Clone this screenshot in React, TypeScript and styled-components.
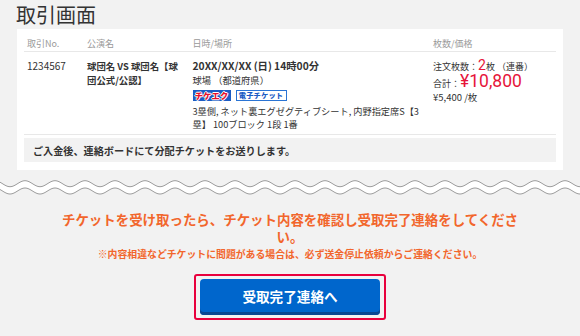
import styled, { createGlobalStyle } from 'styled-components'

const GlobalStyle = createGlobalStyle`
  body {
    margin: 0;
    background: #f2f2f2;
    font-family: "Noto Sans CJK JP", "Noto Sans", sans-serif;
    color: #333;
  }
`

const Page = styled.div`
  width: 580px;
  height: 336px;
  overflow: hidden;
`

const Title = styled.h1`
  margin: 0;
  padding-left: 16px;
  height: 29px;
  line-height: 29px;
  font-size: 20px;
  font-weight: 400;
  color: #333;
`

const Card = styled.div`
  margin: 0 17px;
  padding: 0 7px 8px;
  background: #fff;
`

const Row = styled.div<{ head?: boolean }>`
  display: grid;
  grid-template-columns: 60px 105.5px 240.5px 1fr;
  border-bottom: 1px solid #e8e8e8;
  padding: ${(p) => (p.head ? '9px 0 2px' : '7px 0 3px')};
`

const HeadCell = styled.div`
  padding-left: 3px;
  font-size: 9px;
  line-height: 11px;
  color: #999;
`

const Cell = styled.div<{ pr?: number }>`
  padding-left: 3px;
  padding-right: ${(p) => p.pr ?? 0}px;
  font-size: 9.3px;
  line-height: 14px;
`

const OrderNo = styled.span`
  font-size: 10px;
`

const EventName = styled.div`
  font-weight: 700;
  font-size: 9.4px;
  line-height: 13.5px;
  padding-top: 1px;
`

const DateLine = styled.div`
  font-weight: 700;
  font-size: 10.3px;
  line-height: 14px;
`

const Badges = styled.div`
  display: flex;
  gap: 5px;
  margin-top: 3px;
  height: 11px;
`

const Badge = styled.span<{ variant: 'qe' | 'e' }>`
  display: flex;
  align-items: center;
  justify-content: center;
  box-sizing: border-box;
  height: 11px;
  line-height: 9px;
  font-weight: 900;
  font-size: ${(p) => (p.variant === 'qe' ? '8.2px' : '7.2px')};
  width: ${(p) => (p.variant === 'qe' ? '38px' : '51px')};
  background: ${(p) => (p.variant === 'qe' ? '#1c5cc4' : '#fff')};
  border: 1px solid ${(p) => (p.variant === 'qe' ? '#1c5cc4' : '#2a74d4')};
  color: ${(p) => (p.variant === 'qe' ? '#e8102c' : '#1c5cc4')};
  text-shadow: ${(p) =>
    p.variant === 'qe'
      ? '1px 0 0 #fff, -1px 0 0 #fff, 0 1px 0 #fff, 0 -1px 0 #fff'
      : 'none'};
  letter-spacing: 0.2px;
`

const Seat = styled.div`
  margin-top: 4px;
  line-height: 13px;
  font-size: 9.2px;
`

const PriceLine = styled.div<{ lh: number; size?: number }>`
  height: ${(p) => p.lh}px;
  line-height: ${(p) => p.lh}px;
  font-size: ${(p) => p.size ?? 9}px;
  white-space: nowrap;
`

const Red = styled.span<{ size: number }>`
  display: inline-block;
  font-family: Roboto, "Noto Sans", sans-serif;
  color: #e6153a;
  font-size: ${(p) => p.size}px;
  line-height: ${(p) => Math.round(p.size * 0.72)}px;
`

const Notice = styled.div`
  margin-top: 3px;
  height: 24px;
  padding: 0 9px;
  display: flex;
  align-items: center;
  background: #f2f2f2;
  font-weight: 700;
  font-size: 10.15px;
  color: #333;
`

const WaveSvg = styled.svg`
  display: block;
  margin-top: 8px;
`

const Message = styled.div`
  width: 475px;
  margin: 14.5px auto 0;
  text-align: center;
  color: #f2662c;
  font-weight: 700;
  font-size: 13.44px;
  line-height: 17px;
`

const Caution = styled.div`
  margin-top: 2.5px;
  text-align: center;
  color: #f2662c;
  font-weight: 700;
  font-size: 9.87px;
  line-height: 14px;
`

const ButtonFrame = styled.div`
  width: 192px;
  height: 46px;
  box-sizing: border-box;
  margin: 13px auto 0;
  padding: 3px 4px;
  border: 2px solid #e8003d;
  border-radius: 3px;
`

const PrimaryButton = styled.button`
  display: block;
  width: 180px;
  height: 36px;
  border: none;
  border-radius: 4px;
  background: #0066cc;
  box-shadow: inset 0 -3px 0 #0a4791;
  color: #fff;
  font-family: inherit;
  font-weight: 700;
  font-size: 13.6px;
  padding: 0 0 2px;
  cursor: pointer;
`

const wavePath = (c: number) => {
  const pts: string[] = []
  for (let x = 0; x <= 600; x += 1) {
    const y = c + 3 * Math.cos((2 * Math.PI * (x - 10)) / 30)
    pts.push(`${x},${y.toFixed(2)}`)
  }
  return pts
}

const Wave = () => {
  const top = wavePath(5.7)
  const bottom = wavePath(13)
  return (
    <WaveSvg width="580" height="18" viewBox="0 0 580 18">
      <polygon points={[...top, ...bottom.slice().reverse()].join(' ')} fill="#fff" />
      <polyline points={top.join(' ')} fill="none" stroke="#9c9c9c" strokeWidth="1" />
      <polyline points={bottom.join(' ')} fill="none" stroke="#9c9c9c" strokeWidth="1" />
    </WaveSvg>
  )
}

export default function App() {
  return (
    <Page>
      <GlobalStyle />
      <Title>取引画面</Title>
      <Card>
        <Row head>
          <HeadCell>取引No.</HeadCell>
          <HeadCell>公演名</HeadCell>
          <HeadCell>日時/場所</HeadCell>
          <HeadCell>枚数/価格</HeadCell>
        </Row>
        <Row>
          <Cell>
            <OrderNo>1234567</OrderNo>
          </Cell>
          <Cell pr={10}>
            <EventName>球団名 VS 球団名【球団公式/公認】</EventName>
          </Cell>
          <Cell pr={8}>
            <DateLine>20XX/XX/XX (日) 14時00分</DateLine>
            <div>球場 （都道府県）</div>
            <Badges>
              <Badge variant="qe">チケエク</Badge>
              <Badge variant="e">電子チケット</Badge>
            </Badges>
            <Seat>3塁側, ネット裏エグゼグティブシート, 内野指定席S【3塁】 100ブロック 1段 1番</Seat>
          </Cell>
          <Cell>
            <PriceLine lh={16}>
              注文枚数：<Red size={14}>2</Red>枚 （連番）
            </PriceLine>
            <PriceLine lh={16}>
              合計：<Red size={17.5}>¥10,800</Red>
            </PriceLine>
            <PriceLine lh={13} size={9.5}>
              ¥5,400 /枚
            </PriceLine>
          </Cell>
        </Row>
        <Notice>ご入金後、連絡ボードにて分配チケットをお送りします。</Notice>
      </Card>
      <Wave />
      <Message>チケットを受け取ったら、チケット内容を確認し受取完了連絡をしてください。</Message>
      <Caution>※内容相違などチケットに問題がある場合は、必ず送金停止依頼からご連絡ください。</Caution>
      <ButtonFrame>
        <PrimaryButton>受取完了連絡へ</PrimaryButton>
      </ButtonFrame>
    </Page>
  )
}
